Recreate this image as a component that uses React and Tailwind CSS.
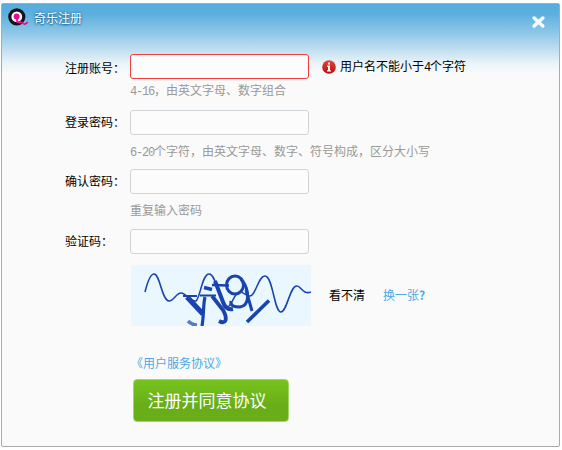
import React from "react";

const Latin = ({ children }) => (
  <span className="font-['Liberation_Mono',monospace] text-[12px] tracking-[-1.2px]">{children}</span>
);

function Field({ label, hint, error, className }) {
  return (
    <div className={`flex ${className}`}>
      <div className={`w-[65px] shrink-0 leading-[16px] text-black ${error ? "pt-[6px]" : "pt-[4px]"}`}>{label}</div>
      <div>
        <div className="flex items-center">
          <input
            aria-label={label}
            className={`block h-[25px] w-[179px] rounded-[3px] border bg-[#fcfcfc] outline-none ${
              error ? "border-[#f63c3c]" : "border-[#cfd4d8]"
            }`}
          />
          {error}
        </div>
        {hint && <div className="pt-[3px] leading-[16px] text-[#999]">{hint}</div>}
      </div>
    </div>
  );
}

function Logo() {
  return (
    <svg width="21" height="19" viewBox="0 0 21 19" className="block">
      <circle cx="8.8" cy="8.8" r="7" fill="#fff" stroke="#17131a" strokeWidth="3.2" />
      <circle cx="8.6" cy="8.4" r="3" fill="#ee0b91" />
      <path d="M9 9V12.6C9.2 14.4 10.6 14.6 12.3 14.2C14.5 13.8 14.8 16.4 17 16C18.4 15.7 19 15 19.8 14" fill="none" stroke="#ee0b91" strokeWidth="1.8" />
    </svg>
  );
}

function ErrorMessage() {
  return (
    <div className="ml-[13px] flex items-center gap-[4px] text-black">
      <svg width="14" height="14" viewBox="0 0 14 14">
        <defs>
          <linearGradient id="alert" x2="0" y2="1">
            <stop stopColor="#e4453d" />
            <stop offset="1" stopColor="#b50d0d" />
          </linearGradient>
        </defs>
        <circle cx="7" cy="7" r="6.8" fill="url(#alert)" />
        <path d="M6 2.5h2v2H6zM5 5.5h3v4.7h1v1.3H5v-1.3h1V6.7H5z" fill="#fff" />
      </svg>
      <span className="leading-[16px]">用户名不能小于<Latin>4</Latin>个字符</span>
    </div>
  );
}

function Captcha() {
  return (
    <svg width="180" height="61" viewBox="0 0 180 61" className="block shrink-0 bg-[#ebf7ff]">
      <g fill="none" stroke="#1944ae">
        <path
          d="M14 27C17 15 20 9 23 9C29 9 31 36 38 36C43 36 45 28 50 28C55 28 60 37 65 36C69 34 71 9 78 9C86 9 89 42 96 42C101 42 103 27 109 27C114 27 117 34 121 30C126 25 128 11 134 11C142 11 143 47 150 47C156 47 159 20 166 21C170 21 172 30 180 27"
          strokeWidth="1.6"
        />
        <path d="M52 31H66M69 30.5H85" strokeWidth="2.2" />
        <path d="M56 32L72 49" strokeWidth="5.2" />
        <path d="M74 32C72 40 73 50 71 61" strokeWidth="3.2" />
        <path d="M57 56C59 58 61 60 66 60" strokeWidth="3.6" opacity=".7" />
        <path d="M73 22.5L81 24.5" strokeWidth="3.6" />
        <path d="M81 31L92 45C97 54 95 60 88 56" strokeWidth="3.8" />
        <path d="M81 20L98 20.5" strokeWidth="2.4" />
        <path d="M84 16L92 37C94 43 97 45 102 44" strokeWidth="4" />
        <ellipse cx="104" cy="20" rx="8.5" ry="9" strokeWidth="3" />
        <path d="M110 14C120 26 118 41 109 42C103 42 99 41 100 36" strokeWidth="3" />
        <path d="M115 25L121 46" strokeWidth="3" />
        <path d="M138 35.5L116 57" strokeWidth="3.6" />
      </g>
    </svg>
  );
}

export default function App() {
  return (
    <div className="h-[450px] w-[562px] bg-white pl-px pt-[3px] font-['Noto_Sans_CJK_SC',sans-serif] text-[12px]">
      <main className="h-[444px] w-[559px] rounded-[2px] border border-[#aaa] bg-[#fafafa] bg-[linear-gradient(to_bottom,#56acdd_0px,#5cb0de_10px,#8bc6e7_28px,#c1dff0_46px,#e9f3f8_59px,#fafafa_70px)]">
        <header className="flex h-[50px] items-start justify-between pl-[6px] pr-[14px] pt-[4px]">
          <div className="flex items-start gap-[5px]">
            <Logo />
            <h1 className="pt-[2px] leading-[16px] text-white [text-shadow:0_0_3px_#17618f,0_1px_2px_#17618f]">奇乐注册</h1>
          </div>
          <button aria-label="关闭" className="mt-[8px]">
            <svg width="13" height="12" viewBox="0 0 13 12" className="block">
              <path d="M2.2 2L10.8 10M10.8 2L2.2 10" stroke="#f5fbff" strokeWidth="3.5" strokeLinecap="round" />
            </svg>
          </button>
        </header>
        <form className="pl-[63px]">
          <Field
            label="注册账号："
            className="h-[56px]"
            hint={<><Latin>4-16</Latin>，由英文字母、数字组合</>}
            error={<ErrorMessage />}
          />
          <Field
            label="登录密码："
            className="h-[59px]"
            hint={<div className="pt-[5px]"><Latin>6-20</Latin>个字符，由英文字母、数字、符号构成，区分大小写</div>}
          />
          <Field label="确认密码：" className="h-[60px]" hint={<div className="pt-[5px]">重复输入密码</div>} />
          <Field label="验证码：" className="h-[36px]" />
          <div className="flex items-center pl-[66px]">
            <Captcha />
            <span className="-mt-[2px] ml-[18px] text-black">看不清</span>
            <a className="-mt-[2px] ml-[18px] text-[#4da8e2]">换一张<span className="font-bold">?</span></a>
          </div>
          <a className="ml-[66px] mt-[29px] block leading-[16px] text-[#4da8e2]">《用户服务协议》</a>
          <button
            type="button"
            className="ml-[68px] mt-[8px] block h-[43px] w-[156px] rounded-[4px] border border-[#a4d66c] bg-[linear-gradient(to_bottom,#76c31c,#69ae18_60%)] pb-[2px] pr-[8px] text-[17px] text-white"
          >
            注册并同意协议
          </button>
        </form>
      </main>
    </div>
  );
}
